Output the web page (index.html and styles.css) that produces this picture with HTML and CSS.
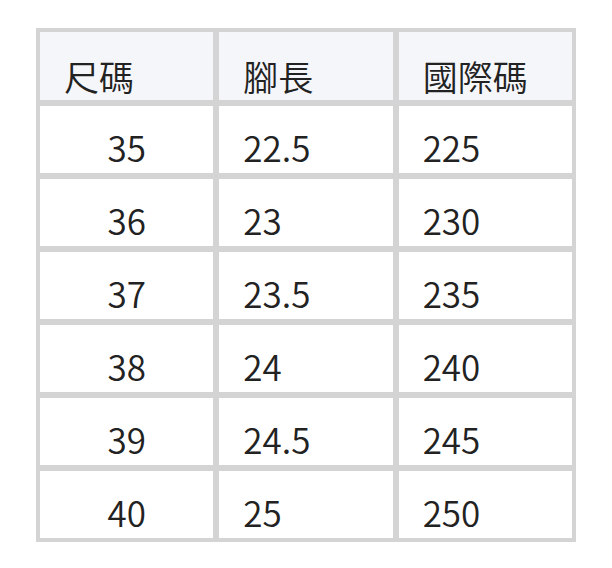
FILE: index.html
```html
<!DOCTYPE html>
<html lang="zh-Hant">
<head>
<meta charset="utf-8">
<link rel="stylesheet" href="styles.css">
</head>
<body>
<table class="size-table">
  <thead>
    <tr><th>尺碼</th><th>腳長</th><th>國際碼</th></tr>
  </thead>
  <tbody>
    <tr><td class="c">35</td><td>22.5</td><td>225</td></tr>
    <tr><td class="c">36</td><td>23</td><td>230</td></tr>
    <tr><td class="c">37</td><td>23.5</td><td>235</td></tr>
    <tr><td class="c">38</td><td>24</td><td>240</td></tr>
    <tr><td class="c">39</td><td>24.5</td><td>245</td></tr>
    <tr><td class="c">40</td><td>25</td><td>250</td></tr>
  </tbody>
</table>
</body>
</html>
```
FILE: styles.css
```css
html, body {
  margin: 0;
  padding: 0;
  background: #ffffff;
}
body {
  font-family: "Noto Sans CJK TC", "Noto Sans", sans-serif;
  color: #222222;
}
.size-table {
  margin: 28px 0 0 36px;
  width: 540px;
  table-layout: fixed;
  border-collapse: separate;
  border-spacing: 2px;
  background: #d4d4d4;
}
.size-table th,
.size-table td {
  border: 2px solid #d4d4d4;
  font-size: 35px;
  line-height: 35px;
  text-align: left;
  font-weight: 350;
  padding-left: 24px;
  padding-right: 8px;
}
.size-table th {
  background: #f5f6fa;
  padding-top: 26px;
  padding-bottom: 7px;
}
.size-table td {
  background: #ffffff;
  padding-top: 23px;
  padding-bottom: 9px;
}
.size-table td.c {
  text-align: center;
  padding-left: 8px;
  padding-right: 8px;
}
```
